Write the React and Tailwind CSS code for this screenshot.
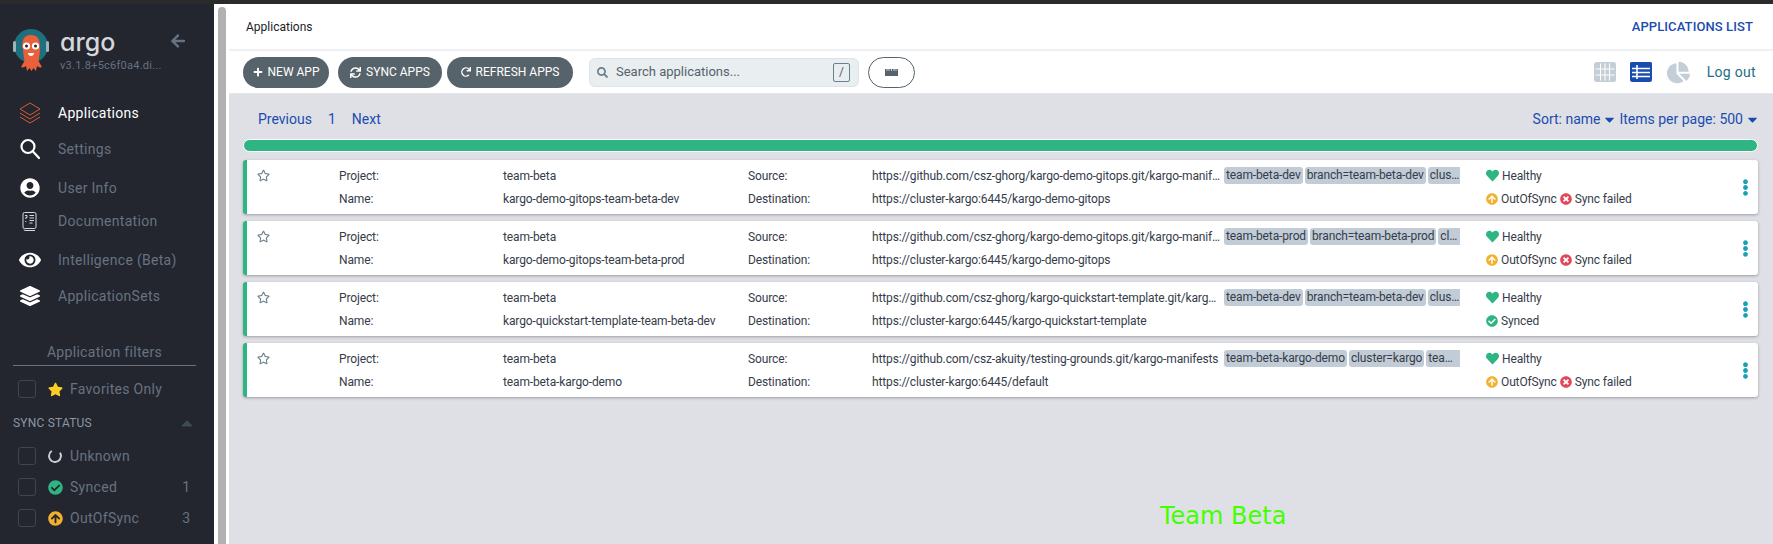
import {
  FaPlus, FaSync, FaRedo, FaSearch, FaChartPie, FaStar, FaRegStar, FaHeart, FaEllipsisV,
  FaArrowLeft, FaCaretDown, FaCaretUp, FaUserCircle, FaEye, FaLayerGroup,
  FaCheckCircle, FaArrowCircleUp, FaTimesCircle,
} from 'react-icons/fa';

const apps = [
  {
    name: 'kargo-demo-gitops-team-beta-dev',
    url: 'https://github.com/csz-ghorg/kargo-demo-gitops.git/kargo-manifests',
    dest: 'https://cluster-kargo:6445/kargo-demo-gitops',
    tags: ['team-beta-dev', 'branch=team-beta-dev', 'cluster=kargo'],
    synced: false,
  },
  {
    name: 'kargo-demo-gitops-team-beta-prod',
    url: 'https://github.com/csz-ghorg/kargo-demo-gitops.git/kargo-manifests',
    dest: 'https://cluster-kargo:6445/kargo-demo-gitops',
    tags: ['team-beta-prod', 'branch=team-beta-prod', 'cluster=kargo'],
    synced: false,
  },
  {
    name: 'kargo-quickstart-template-team-beta-dev',
    url: 'https://github.com/csz-ghorg/kargo-quickstart-template.git/kargo-manifests',
    dest: 'https://cluster-kargo:6445/kargo-quickstart-template',
    tags: ['team-beta-dev', 'branch=team-beta-dev', 'cluster=kargo'],
    synced: true,
  },
  {
    name: 'team-beta-kargo-demo',
    url: 'https://github.com/csz-akuity/testing-grounds.git/kargo-manifests',
    dest: 'https://cluster-kargo:6445/default',
    tags: ['team-beta-kargo-demo', 'cluster=kargo', 'team=beta'],
    synced: false,
  },
];

const ArgoLogo = () => (
  <svg width="36" height="44" viewBox="0 0 36 44">
    <circle cx="18" cy="18" r="17" fill="#1f6f7f" />
    <rect x="0" y="13" width="3" height="11" rx="1.5" fill="#9fb4bd" />
    <rect x="33" y="13" width="3" height="11" rx="1.5" fill="#9fb4bd" />
    <path d="M9 20C9 10 12 7 18 7s9 3 9 13c0 5-1 10-1.500 13l3.500 6c-2 1-4 0-5-1l-1 5-2.500-3-2 3-2-3-2.500 3-1-5c-1 1-3 2-5 1l3.500-6c-.5-3-1.500-8-1.500-13z" fill="#e9603a" />
    <circle cx="13.500" cy="18" r="3.600" fill="#fff" />
    <circle cx="22.500" cy="18" r="3.600" fill="#fff" />
    <circle cx="13.500" cy="18" r="1.500" fill="#23252f" />
    <circle cx="22.500" cy="18" r="1.500" fill="#23252f" />
    <path d="M15 25h6c0 2-1.500 3-3 3s-3-1-3-3z" fill="#fff" />
  </svg>
);

const OutlineStack = () => (
  <svg width="22" height="22" viewBox="0 0 22 22" fill="none" stroke="#d9593a" strokeWidth="1" strokeLinejoin="round">
    <path d="M11 1l10 6-10 6L1 7z" />
    <path d="M1 11l10 6 10-6" />
    <path d="M1 15l10 6 10-6" />
  </svg>
);

const SearchIcon = () => (
  <svg width="20" height="22" viewBox="0 0 20 22" fill="none" stroke="#fff" strokeWidth="2.2" strokeLinecap="round">
    <circle cx="8" cy="8.5" r="6.5" />
    <path d="M13 13.5l6 6.5" />
  </svg>
);

const DocIcon = () => (
  <svg width="15" height="19" viewBox="0 0 15 19" fill="none" stroke="#d5d8db" strokeWidth="1">
    <rect x="1" y="0.5" width="13" height="16" rx="1.5" />
    <path d="M2 17.5c0 .6.5 1 1 1h10" />
    <path d="M7.5 3.5h4.5M7.5 6h4.5M7.5 8.5h4.5M7.5 11h3M3 3.5h2v2H3.8v1.5M3.8 9v1" />
  </svg>
);

const GridIcon = () => (
  <svg width="22" height="20" viewBox="0 0 22 20">
    <rect width="22" height="20" rx="2.5" fill="#c4ced7" />
    <path d="M1.5 7h19M1.5 13h19M6.5 1.5v17M11 1.5v17M15.5 1.5v17" stroke="#fff" strokeWidth="1" />
  </svg>
);

const ListIcon = () => (
  <svg width="22" height="20" viewBox="0 0 22 20">
    <rect width="22" height="20" rx="2.5" fill="#1a4cae" />
    <path d="M2 6.500h18M2 10.500h18M2 14.500h18M7 3v14" stroke="#fff" strokeWidth="1.6" />
    <rect x="0" y="0" width="22" height="3" rx="1.5" fill="#1a4cae" />
  </svg>
);

const RulerIcon = () => (
  <svg width="13" height="8" viewBox="0 0 13 8">
    <rect y="1" width="13" height="7" fill="#56636b" />
    <path d="M2 1v2M4 1v2M6.500 1v2M9 1v2M11 1v2" stroke="#fff" strokeWidth="0.7" />
  </svg>
);

const NavItem = ({ icon, label, active, className }) => (
  <div className={`flex items-center h-6 ${className}`}>
    <div className="w-[58px] flex justify-center pl-[1px] shrink-0">{icon}</div>
    <span className={`text-[14px] tracking-[0.3px] ${active ? 'text-white' : 'text-[#677380]'}`}>{label}</span>
  </div>
);

const FilterRow = ({ icon, label, count, className }) => (
  <div className={`flex items-center h-[18px] pl-[18px] pr-[24px] ${className}`}>
    <div className="w-[18px] h-[18px] border border-[#3c4654] rounded-[3px] shrink-0" />
    <div className="w-[16px] ml-[11px] mr-[7px] flex justify-center shrink-0">{icon}</div>
    <span className="text-[14px] tracking-[0.3px] text-[#677380] flex-1">{label}</span>
    {count && <span className="text-[14px] text-[#677380]">{count}</span>}
  </div>
);

const ToolButton = ({ icon, label, className }) => (
  <button className={`h-[31px] rounded-full bg-[#56636b] text-white text-[12px] flex items-center justify-center gap-[5px] ${className}`}>
    {icon}
    {label}
  </button>
);

const AppCard = ({ app }) => (
  <div className="h-[54px] bg-white border-l-4 border-[#2eb583] rounded-[3px] shadow-[0_1px_3px_rgba(0,0,0,0.3)] mb-[7px] grid grid-cols-[92px_164px_245px_124px_352px_262px_1fr_24px] grid-rows-[23px_23px] pt-[4px] items-center text-[12px] tracking-[-0.13px] text-[#363c4a]">
    <div className="col-start-1 row-start-1 pl-[10px] text-[#6d7f8b]"><FaRegStar size={13} /></div>
    <div className="col-start-2 row-start-1">Project:</div>
    <div className="col-start-3 row-start-1">team-beta</div>
    <div className="col-start-4 row-start-1">Source:</div>
    <div className="col-start-5 row-start-1 truncate pr-[3px]">{app.url}</div>
    <div className="col-start-6 row-start-1 flex gap-[2px] overflow-hidden w-[236px] h-[17px]">
      <span className="bg-[#c1ccd6] rounded-[3px] px-[2px] leading-[17px] whitespace-nowrap shrink-0">{app.tags[0]}</span>
      <span className="bg-[#c1ccd6] rounded-[3px] px-[2px] leading-[17px] whitespace-nowrap shrink-0">{app.tags[1]}</span>
      <span className="bg-[#c1ccd6] rounded-l-[3px] pl-[2px] leading-[17px] truncate flex-1 min-w-0">{app.tags[2]}</span>
    </div>
    <div className="col-start-7 row-start-1 flex items-center gap-[3px]"><FaHeart size={13} className="text-[#2eb583]" />Healthy</div>
    <div className="col-start-8 row-start-1 row-span-2 flex justify-start pl-[3px] text-[#18a0b4]"><FaEllipsisV size={17} /></div>

    <div className="col-start-2 row-start-2">Name:</div>
    <div className="col-start-3 row-start-2">{app.name}</div>
    <div className="col-start-4 row-start-2">Destination:</div>
    <div className="col-start-5 col-span-2 row-start-2">{app.dest}</div>
    {app.synced ? (
      <div className="col-start-7 row-start-2 flex items-center gap-[3px]"><FaCheckCircle size={12} className="text-[#2eb583]" />Synced</div>
    ) : (
      <div className="col-start-7 row-start-2 flex items-center gap-[3px] whitespace-nowrap">
        <FaArrowCircleUp size={12} className="text-[#f4b02c]" />OutOfSync
        <FaTimesCircle size={12} className="text-[#e2475a]" />Sync failed
      </div>
    )}
  </div>
);

export default function App() {
  return (
    <div className="relative h-[544px] w-[1773px] overflow-hidden font-['Roboto',sans-serif] bg-[#dfe0e6]">
      <div className="h-[4px] bg-[#2b2b2b]" />
      <div className="flex h-[540px]">
        <aside className="w-[214px] bg-[#23252f] shrink-0 overflow-hidden">
          <div className="flex pl-[13px] pt-[24px] h-[81px]">
            <ArgoLogo />
            <div className="ml-[11px] w-[96px]">
              <div className="text-[25px] leading-[30px] font-medium font-['Inter',sans-serif] [font-feature-settings:'cv11'] text-[#d5d8db] -mt-[1px]">argo</div>
              <div className="text-[11px] tracking-[0.25px] text-[#677380] whitespace-nowrap mt-[1px]">v3.1.8+5c6f0a4.di...</div>
            </div>
            <FaArrowLeft size={16} className="text-[#677380] ml-[14px] mt-[5px]" />
          </div>
          <NavItem icon={<OutlineStack />} label="Applications" active className="mt-[16px]" />
          <NavItem icon={<SearchIcon />} label="Settings" className="mt-[12px]" />
          <NavItem icon={<FaUserCircle size={20} className="text-white" />} label="User Info" className="mt-[15px]" />
          <NavItem icon={<DocIcon />} label="Documentation" className="mt-[9px]" />
          <NavItem icon={<FaEye size={22} className="text-white" />} label="Intelligence (Beta)" className="mt-[15px]" />
          <NavItem icon={<FaLayerGroup size={20} className="text-white" />} label="ApplicationSets" className="mt-[12px]" />
          <div className="mx-[13px] mt-[34px] w-[183px] text-center text-[14px] tracking-[0.3px] text-[#677380] border-b border-[#677380] pb-[2px]">Application filters</div>
          <FilterRow icon={<FaStar size={15} className="text-[#fdce25]" />} label="Favorites Only" className="mt-[14px]" />
          <div className="flex items-center justify-between pl-[13px] pr-[18px] mt-[16px] text-[12px] tracking-[0.2px] text-[#8a98a4]">
            SYNC STATUS
            <FaCaretUp size={18} className="text-[#3f4c57]" />
          </div>
          <FilterRow icon={<span className="block w-[14px] h-[14px] rounded-full border-2 border-[#c9ced4] border-t-transparent rotate-12" />} label="Unknown" className="mt-[15px]" />
          <FilterRow icon={<FaCheckCircle size={15} className="text-[#2eb583]" />} label="Synced" count="1" className="mt-[13px]" />
          <FilterRow icon={<FaArrowCircleUp size={15} className="text-[#f4b02c]" />} label="OutOfSync" count="3" className="mt-[13px]" />
        </aside>

        {/* scrollbar strip */}
        <div className="w-[15px] bg-white shrink-0 pl-[4px] pr-[3px]">
          <div className="h-full bg-[#b1b1b1] rounded-t-[4px] mt-[3px]" />
        </div>

        <main className="flex-1 min-w-0">
          <div className="h-[47px] bg-white flex items-center justify-between pl-[17px] pr-[20px] border-b-2 border-[#eef0f4]">
            <span className="text-[12px] text-[#1c1e26]">Applications</span>
            <span className="text-[13px] font-medium tracking-[0.1px] text-[#1a4cae]">APPLICATIONS LIST</span>
          </div>
          <div className="h-[43px] bg-white border-b border-[#e6e8ec] flex items-center pl-[14px] pr-[17px]">
            <ToolButton icon={<FaPlus size={10} />} label="NEW APP" className="w-[86px] mr-[9px]" />
            <ToolButton icon={<FaSync size={11} />} label="SYNC APPS" className="w-[104px] mr-[5px]" />
            <ToolButton icon={<FaRedo size={10} />} label="REFRESH APPS" className="w-[126px] mr-[16px]" />
            <div className="w-[270px] h-[29px] bg-[#e9eef1] border border-[#dde3e8] rounded-[6px] flex items-center pl-[7px] pr-[8px] text-[#56636b] text-[13px] mr-[9px]">
              <FaSearch size={11} className="text-[#6d7f8b] mr-[8px]" />
              <span className="flex-1">Search applications...</span>
              <span className="w-[17px] h-[19px] border border-[#6d7f8b] rounded-[2px] text-[12px] flex items-center justify-center">/</span>
            </div>
            <div className="w-[47px] h-[31px] border border-[#56636b] rounded-full flex items-center justify-center">
              <RulerIcon />
            </div>
            <div className="flex-1" />
            <GridIcon />
            <div className="w-[14px]" />
            <ListIcon />
            <div className="w-[15px]" />
            <FaChartPie size={23} className="text-[#c4ced7]" />
            <span className="ml-[17px] text-[14px] tracking-[0.3px] text-[#1c6d85]">Log out</span>
          </div>
          <div className="pl-[14px] pr-[15px]">
            <div className="flex justify-between items-center h-[45px] pt-[5px] pl-[15px] text-[14px] text-[#1a4cae]">
              <div className="flex gap-[16px]">
                <span>Previous</span>
                <span>1</span>
                <span>Next</span>
              </div>
              <div className="flex items-center gap-[2px] -mr-[2px]">
                Sort: name <FaCaretDown size={15} /> Items per page: 500 <FaCaretDown size={15} />
              </div>
            </div>
            <div className="h-[13px] rounded-full bg-[#2eb583] border border-white mb-[8px]" />
            {apps.map((app) => <AppCard key={app.name} app={app} />)}
          </div>
        </main>
      </div>

      {/* label burnt into the capture */}
      <span className="absolute left-[1160px] top-[498px] text-[24px] text-[#44ff00] font-['DejaVu_Sans',sans-serif]">Team Beta</span>
    </div>
  );
}
